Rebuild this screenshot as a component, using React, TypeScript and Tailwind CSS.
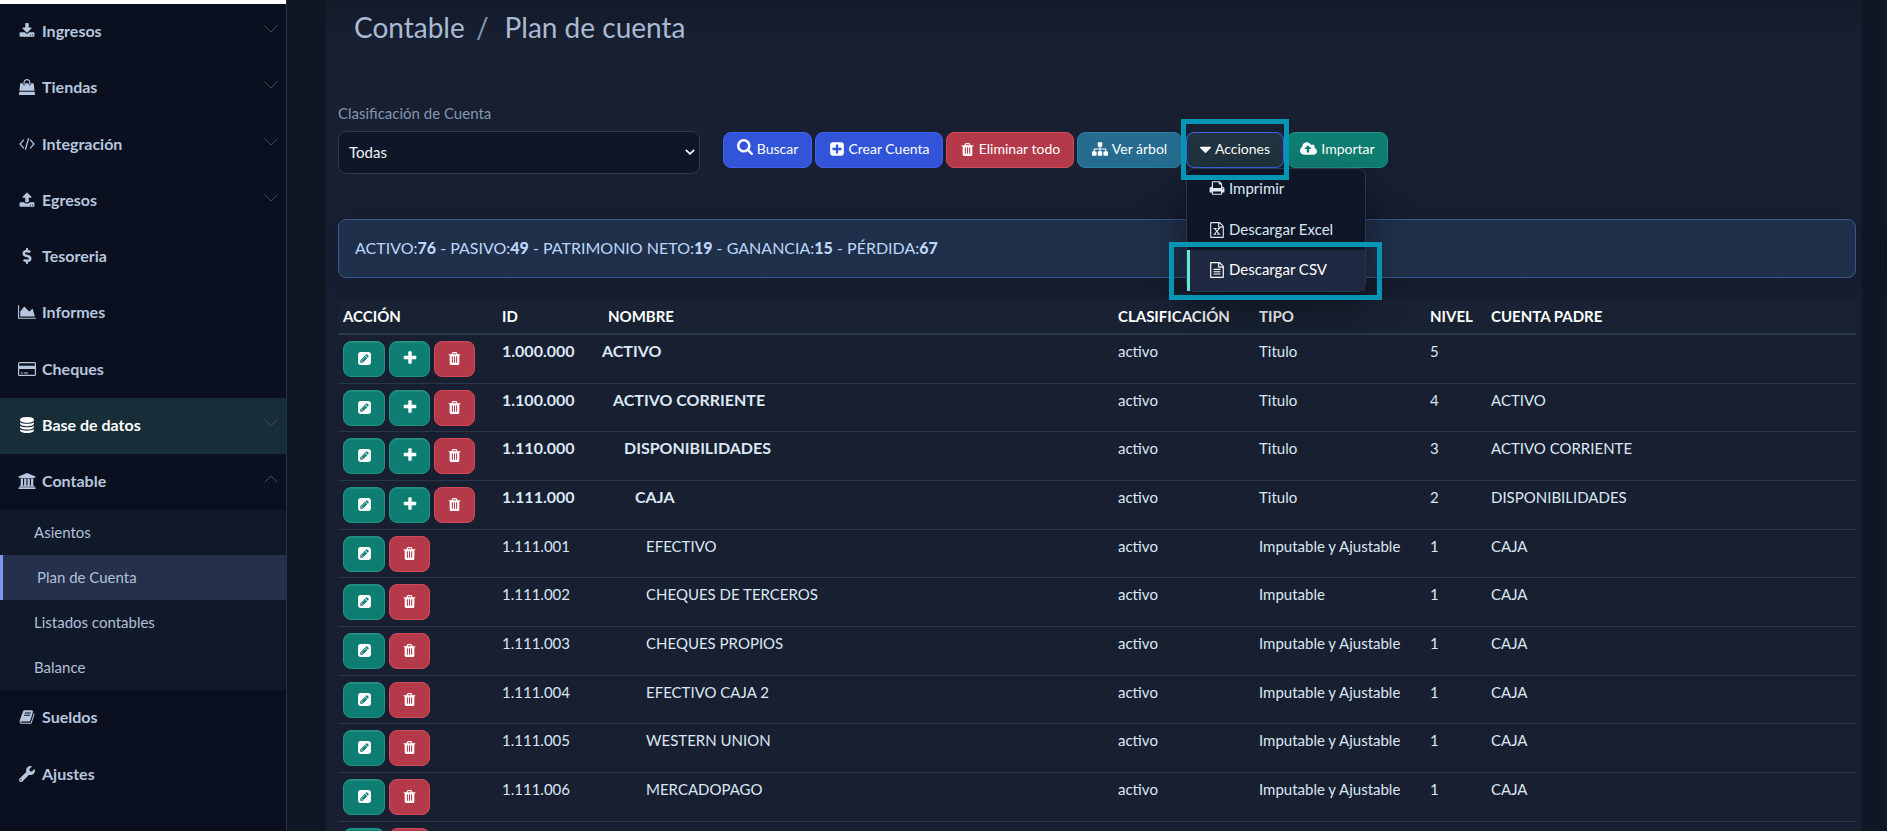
import * as React from "react";
import { FaDollarSign, FaWrench } from "react-icons/fa";

type IconProps = { className?: string };

const makeIcon = (d: string, viewBox = "0 0 1792 1792") => {
  return ({ className }: IconProps) => (
    <svg viewBox={viewBox} fill="currentColor" aria-hidden="true" className={className}>
      <path d={d} />
    </svg>
  );
};

const Download = makeIcon(
  "M1344 1344q0-26-19-45t-45-19-45 19-19 45 19 45 45 19 45-19 19-45zm256 0q0-26-19-45t-45-19-45 19-19 45 19 45 45 19 45-19 19-45zm128-224v320q0 40-28 68t-68 28h-1472q-40 0-68-28t-28-68v-320q0-40 28-68t68-28h465l135 136q58 56 136 56t136-56l136-136h464q40 0 68 28t28 68zm-325-569q17 41-14 70l-448 448q-18 19-45 19t-45-19l-448-448q-31-29-14-70 17-39 59-39h256v-448q0-26 19-45t45-19h256q26 0 45 19t19 45v448h256q42 0 59 39z"
);
const Upload = makeIcon(
  "M1344 1472q0-26-19-45t-45-19-45 19-19 45 19 45 45 19 45-19 19-45zm256 0q0-26-19-45t-45-19-45 19-19 45 19 45 45 19 45-19 19-45zm128-224v320q0 40-28 68t-68 28h-1472q-40 0-68-28t-28-68v-320q0-40 28-68t68-28h427q21 56 70.5 92t110.5 36h256q61 0 110.5-36t70.5-92h427q40 0 68 28t28 68zm-325-648q-17 40-59 40h-256v448q0 26-19 45t-45 19h-256q-26 0-45-19t-19-45v-448h-256q-42 0-59-40-17-39 14-69l448-448q18-19 45-19t45 19l448 448q31 30 14 69z"
);
const AreaChart = makeIcon(
  "M2048 1536v128h-2048v-1536h128v1408h1920zm-384-1024l256 896h-1664v-576l448-576 576 576z",
  "0 0 2048 1792"
);
const Database = makeIcon(
  "M896 768q237 0 443-43t325-127v170q0 69-103 128t-280 93.5-385 34.5-385-34.5-280-93.5-103-128v-170q119 84 325 127t443 43zm0 768q237 0 443-43t325-127v170q0 69-103 128t-280 93.5-385 34.5-385-34.5-280-93.5-103-128v-170q119 84 325 127t443 43zm0-384q237 0 443-43t325-127v170q0 69-103 128t-280 93.5-385 34.5-385-34.5-280-93.5-103-128v-170q119 84 325 127t443 43zm0-1152q208 0 385 34.5t280 93.5 103 128v128q0 69-103 128t-280 93.5-385 34.5-385-34.5-280-93.5-103-128v-128q0-69 103-128t280-93.5 385-34.5z"
);
const Bank = makeIcon(
  "M832 0l960 384v128h-128q0 26-20.5 45t-48.5 19h-1526q-28 0-48.5-19t-20.5-45h-128v-128zm-704 640h256v768h128v-768h256v768h128v-768h256v768h128v-768h256v768h59q28 0 48.5 19t20.5 45v64h-1664v-64q0-26 20.5-45t48.5-19h59v-768zm1595 960q28 0 48.5 19t20.5 45v128h-1920v-128q0-26 20.5-45t48.5-19h1782z",
  "-128 0 1920 1792"
);
const Book = makeIcon(
  "M1703 478q40 57 18 129l-275 906q-19 64-76.5 107.5t-122.5 43.5h-923q-77 0-148.5-53.5t-99.5-131.5q-24-67-2-127 0-4 3-27t4-37q1-8-3-21.5t-3-19.5q2-11 8-21t16.5-23.5 16.5-23.5q23-38 45-91.5t30-91.5q3-10 .5-30t-.5-28q3-11 17-28t17-23q21-36 42-92t25-90q1-9-2.5-32t.5-28q4-13 22-30.5t22-22.5q19-26 42.5-84.5t27.5-96.5q1-8-3-25.5t-2-26.5q2-8 9-18t18-23 17-21q8-12 16.5-30.5t15-35 16-36 19.5-32 26.5-23.5 36-11.5 47.5 5.5l-1 3q38-9 51-9h761q74 0 114 56t18 130l-274 906q-36 119-71.5 153.5t-128.5 34.5h-869q-27 0-38 15-11 16-1 43 24 70 144 70h923q29 0 56-15.5t35-41.5l300-987q7-22 5-57 38 15 59 43zm-1064 2q-4 13 2 22.5t20 9.5h608q13 0 25.5-9.5t16.5-22.5l21-64q4-13-2-22.5t-20-9.5h-608q-13 0-25.5 9.5t-16.5 22.5zm-83 256q-4 13 2 22.5t20 9.5h608q13 0 25.5-9.5t16.5-22.5l21-64q4-13-2-22.5t-20-9.5h-608q-13 0-25.5 9.5t-16.5 22.5z"
);
const Bag = makeIcon(
  "M1758 1436l34 260q3 39-23 68-26 28-65 28h-1616q-39 0-65-28-26-29-23-68l34-260h1724zm-96-890l82 762h-1696l82-762q4-34 30-57t60-23h224v128q0 53 37.500 90.500t90.500 37.500 90.500-37.500 37.500-90.500v-128h384v128q0 53 37.500 90.500t90.500 37.500 90.500-37.500 37.500-90.500v-128h212q34 0 60 23t30 57zm-382-162v212q0 26-19 45t-45 19-45-19-19-45v-212q0-106-75-181t-181-75-181 75-75 181v212q0 26-19 45t-45 19-45-19-19-45v-212q0-159 112.500-271.500t271.500-112.500 271.500 112.500 112.500 271.500z",
  "0 0 1800 1792"
);
const Search = makeIcon(
  "M1216 832q0-185-131.5-316.5t-316.5-131.5-316.5 131.5-131.5 316.5 131.5 316.5 316.5 131.5 316.5-131.5 131.5-316.5zm512 832q0 52-38 90t-90 38q-54 0-90-38l-343-342q-179 124-399 124-143 0-273.5-55.5t-225-150-150-225-55.5-273.5 55.5-273.5 150-225 225-150 273.5-55.5 273.5 55.5 225 150 150 225 55.5 273.5q0 220-124 399l343 343q37 37 37 90z",
  "64 128 1664 1664"
);
const Plus = makeIcon(
  "M1600 736v192q0 40-28 68t-68 28h-416v416q0 40-28 68t-68 28h-192q-40 0-68-28t-28-68v-416h-416q-40 0-68-28t-28-68v-192q0-40 28-68t68-28h416v-416q0-40 28-68t68-28h192q40 0 68 28t28 68v416h416q40 0 68 28t28 68z"
);
const PlusSquare = makeIcon(
  "M1408 960v-128q0-26-19-45t-45-19h-320v-320q0-26-19-45t-45-19h-128q-26 0-45 19t-19 45v320h-320q-26 0-45 19t-19 45v128q0 26 19 45t45 19h320v320q0 26 19 45t45 19h128q26 0 45-19t19-45v-320h320q26 0 45-19t19-45zm256-544v960q0 119-84.5 203.5t-203.5 84.5h-960q-119 0-203.5-84.5t-84.5-203.5v-960q0-119 84.5-203.5t203.5-84.5h960q119 0 203.5 84.5t84.5 203.5z"
);
const PencilSquare = makeIcon(
  "M404 1108l152 152-52 52h-56v-96h-96v-56zm414-390q14 13-3 30l-291 291q-17 17-30 3-14-13 3-30l291-291q17-17 30-3zm-274 690l544-544-288-288-544 544v288h288zm608-608l92-92q28-28 28-68t-28-68l-152-152q-28-28-68-28t-68 28l-92 92zm384-384v960q0 119-84.5 203.5t-203.5 84.5h-960q-119 0-203.5-84.5t-84.5-203.5v-960q0-119 84.5-203.5t203.5-84.5h960q119 0 203.5 84.5t84.5 203.5z",
  "-128 0 1792 1792"
);
const Trash = makeIcon(
  "M704 1376v-704q0-14-9-23t-23-9h-64q-14 0-23 9t-9 23v704q0 14 9 23t23 9h64q14 0 23-9t9-23zm256 0v-704q0-14-9-23t-23-9h-64q-14 0-23 9t-9 23v704q0 14 9 23t23 9h64q14 0 23-9t9-23zm256 0v-704q0-14-9-23t-23-9h-64q-14 0-23 9t-9 23v704q0 14 9 23t23 9h64q14 0 23-9t9-23zm-544-992h448l-48-117q-7-9-17-11h-317q-10 2-17 11zm928 32v64q0 14-9 23t-23 9h-96v948q0 83-47 143.5t-113 60.5h-832q-66 0-113-58.5t-47-141.5v-952h-96q-14 0-23-9t-9-23v-64q0-14 9-23t23-9h309l70-167q15-37 54-63t79-26h320q40 0 79 26t54 63l70 167h309q14 0 23 9t9 23z"
);
const Sitemap = makeIcon(
  "M1792 1248v320q0 40-28 68t-68 28h-320q-40 0-68-28t-28-68v-320q0-40 28-68t68-28h96v-192h-512v192h96q40 0 68 28t28 68v320q0 40-28 68t-68 28h-320q-40 0-68-28t-28-68v-320q0-40 28-68t68-28h96v-192h-512v192h96q40 0 68 28t28 68v320q0 40-28 68t-68 28h-320q-40 0-68-28t-28-68v-320q0-40 28-68t68-28h96v-192q0-52 38-90t90-38h512v-192h-96q-40 0-68-28t-28-68v-320q0-40 28-68t68-28h320q40 0 68 28t28 68v320q0 40-28 68t-68 28h-96v192h512q52 0 90 38t38 90v192h96q40 0 68 28t28 68z"
);
const CaretDown = makeIcon(
  "M1408 704q0 26-19 45l-448 448q-19 19-45 19t-45-19l-448-448q-19-19-19-45t19-45 45-19h896q26 0 45 19t19 45z",
  "384 384 1024 1024"
);
const CloudUpload = makeIcon(
  "M1152 864q0-14-9-23l-352-352q-9-9-23-9t-23 9l-351 351q-10 12-10 24 0 14 9 23t23 9h224v352q0 13 9.5 22.5t22.5 9.5h192q13 0 22.5-9.5t9.5-22.5v-352h224q13 0 22.5-9.5t9.5-22.5zm640 288q0 159-112.5 271.5t-271.5 112.5h-1088q-185 0-316.5-131.5t-131.5-316.5q0-130 70-240t188-165q-2-30-2-43 0-212 150-362t362-150q156 0 285.5 87t188.5 231q71-62 166-62 106 0 181 75t75 181q0 76-41 138 130 31 213.5 135.5t83.5 238.5z",
  "-128 0 1920 1792"
);
const Print = makeIcon(
  "M448 1536h896v-256h-896v256zm0-640h896v-384h-160q-40 0-68-28t-28-68v-160h-640v640zm1152 64q0-26-19-45t-45-19-45 19-19 45 19 45 45 19 45-19 19-45zm128 0v416q0 13-9.5 22.5t-22.5 9.5h-224v160q0 40-28 68t-68 28h-960q-40 0-68-28t-28-68v-160h-224q-13 0-22.5-9.5t-9.5-22.5v-416q0-79 56.5-135.5t135.5-56.5h64v-544q0-40 28-68t68-28h672q40 0 88 20t76 48l152 152q28 28 48 76t20 88v256h64q79 0 135.5 56.5t56.5 135.5z"
);

const Code = ({ className }: IconProps) => (
  <svg viewBox="0 0 18 18" fill="none" stroke="currentColor" strokeWidth="1.4" aria-hidden="true" className={className}>
    <path d="M5.500 4L1.200 9l4.300 5M12.500 4l4.300 5-4.300 5M10.800 2.500L7.200 15.500" />
  </svg>
);

const Card = ({ className }: IconProps) => (
  <svg viewBox="0 0 18 16" fill="currentColor" aria-hidden="true" className={className}>
    <path
      fillRule="evenodd"
      d="M1.500 1h15A1.500 1.500 0 0 1 18 2.500v11a1.500 1.500 0 0 1-1.500 1.500h-15A1.500 1.500 0 0 1 0 13.500v-11A1.500 1.500 0 0 1 1.500 1zM1.200 2.200v2.600h15.600V2.200zM1.200 8v5.800h15.600V8z"
    />
    <path d="M3 11.500h2v1H3zM6 11.500h4v1H6z" />
  </svg>
);

const fileOutline =
  "M1596 380q28 28 48 76t20 88v1152q0 40-28 68t-68 28h-1344q-40 0-68-28t-28-68v-1600q0-40 28-68t68-28h896q40 0 88 20t76 48zm-444-244v376h376q-10-29-22-41l-313-313q-12-12-41-22zm384 1528v-1024h-416q-40 0-68-28t-28-68v-416h-768v1536h1280z";

const FileText = makeIcon(
  fileOutline + "M512 768h768v128h-768zM512 1024h768v128h-768zM512 1280h768v128h-768z"
);
const FileExcel = makeIcon(
  fileOutline +
    "M500 1420v-110h85l215-268-205-262h-85v-110h330v110h-75l130 168 125-168h-75v-110h310v110h-85l-205 262 215 268h85v110h-330v-110h75l-140-178-140 178h75v110z"
);

const Chevron = ({ open }: { open?: boolean }) => (
  <svg
    viewBox="0 0 14 8"
    fill="none"
    stroke="currentColor"
    aria-hidden="true"
    className={open ? "h-2 w-3.5 rotate-180" : "h-2 w-3.5"}
  >
    <path d="M0.500 0.500L7 7L13.500 0.500" />
  </svg>
);

type MenuItem = {
  label: string;
  icon: React.ComponentType<IconProps>;
  chevron?: boolean;
  open?: boolean;
  active?: boolean;
  children?: { label: string; active?: boolean }[];
};

const menu: MenuItem[][] = [
  [
    { label: "Ingresos", icon: Download, chevron: true },
    { label: "Tiendas", icon: Bag, chevron: true },
  ],
  [
    { label: "Integración", icon: Code, chevron: true },
    { label: "Egresos", icon: Upload, chevron: true },
    { label: "Tesoreria", icon: FaDollarSign },
    { label: "Informes", icon: AreaChart },
  ],
  [
    { label: "Cheques", icon: Card },
    { label: "Base de datos", icon: Database, chevron: true, active: true },
    {
      label: "Contable",
      icon: Bank,
      chevron: true,
      open: true,
      children: [
        { label: "Asientos" },
        { label: "Plan de Cuenta", active: true },
        { label: "Listados contables" },
        { label: "Balance" },
      ],
    },
    { label: "Sueldos", icon: Book },
  ],
  [{ label: "Ajustes", icon: FaWrench }],
];

const Sidebar = () => {
  return (
    <aside className="w-[287px] shrink-0 border-r border-[#263347] bg-[#0a101f]">
      <div className="h-1 bg-white" />
      <nav className="flex flex-col gap-px">
        {menu.map((group) => (
          <ul key={group[0].label}>
            {group.map((item) => (
              <li key={item.label}>
                <a
                  href="#"
                  className={
                    item.active
                      ? "flex h-14 items-center bg-[#172e38] pr-2 pb-0.5 pl-[18px] text-base font-bold text-white"
                      : "flex h-14 items-center pr-2 pb-0.5 pl-[18px] text-base font-bold text-[#b6c6de]"
                  }
                >
                  <span className="flex w-6 shrink-0">
                    <item.icon className="h-4 w-[18px]" />
                  </span>
                  <span className="grow">{item.label}</span>
                  {item.chevron && (
                    <span className="mb-1 text-[#454a52]">
                      <Chevron open={item.open} />
                    </span>
                  )}
                </a>
                {item.children && (
                  <ul className="bg-[#10192a]">
                    {item.children.map((child) => (
                      <li key={child.label}>
                        <a
                          href="#"
                          className={
                            child.active
                              ? "flex h-[45px] items-center border-l-3 border-[#8094f8] bg-[#25304d] pl-[34px] text-[15px] text-[#b0c0d6]"
                              : "flex h-[45px] items-center pl-[34px] text-[15px] text-[#b0c0d6]"
                          }
                        >
                          {child.label}
                        </a>
                      </li>
                    ))}
                  </ul>
                )}
              </li>
            ))}
          </ul>
        ))}
      </nav>
    </aside>
  );
};

const buttonBase =
  "flex h-9 items-center justify-center gap-1 rounded-lg border pb-0.5 text-sm text-white";

const ActionsMenu = () => {
  return (
    <div className="relative ml-px">
      <button
        type="button"
        aria-expanded="true"
        className={`${buttonBase} w-[98px] border-[#4361ee] bg-[#20343f]`}
      >
        <CaretDown className="h-[11px] w-[11px]" />
        Acciones
      </button>
      <div className="absolute -inset-x-[5px] -top-[13px] z-20 h-[61px] border-5 border-[#0494b4]" />
      <ul className="absolute top-9 left-0 z-10 w-[180px] rounded-lg border border-[#2a364a] bg-[#0e1627] text-[15px] text-[#dbe6f3] shadow-[0_16px_40px_rgba(0,0,0,0.45)]">
        <li>
          <a href="#" className="flex h-10 items-center gap-1 pb-0.5 pl-[22px]">
            <Print className="h-4 w-4" />
            Imprimir
          </a>
        </li>
        <li>
          <a href="#" className="flex h-[41px] items-center gap-1 pl-[22px]">
            <FileExcel className="h-4 w-4" />
            Descargar Excel
          </a>
        </li>
        <li className="relative">
          <a href="#" className="flex h-[41px] items-center gap-1 border-l-3 border-[#5eead4] bg-[#1f2a42] pb-0.5 pl-[19px] text-white">
            <FileText className="h-4 w-4" />
            Descargar CSV
          </a>
          <div className="absolute -top-2 -right-[17px] -bottom-[9px] -left-[18px] border-5 border-[#0494b4]" />
        </li>
      </ul>
    </div>
  );
};

const Toolbar = () => {
  return (
    <form className="flex">
      <div className="w-[362px]">
        <label htmlFor="clasificacion" className="mb-1.5 block text-[15px] leading-[23px] text-[#8496af]">
          Clasificación de Cuenta
        </label>
        <div className="relative">
          <select
            id="clasificacion"
            className="h-[43px] w-full appearance-none rounded-lg border border-[#2d3b4f] bg-[#0e1627] px-2.5 text-[15px] text-[#eef3fa]"
          >
            <option>Todas</option>
          </select>
          <svg
            viewBox="0 0 10 6"
            fill="none"
            stroke="#ffffff"
            strokeWidth="1.600"
            aria-hidden="true"
            className="pointer-events-none absolute top-[18px] right-[5px] h-1.5 w-2.5"
          >
            <path d="M0.800 0.800L5 4.800L9.200 0.800" />
          </svg>
        </div>
      </div>
      <div className="mt-[30px] ml-[23px] flex items-start gap-[3px]">
        <button type="button" className={`${buttonBase} w-[89px] border-[#4361ee] bg-[#3154d8]`}>
          <Search className="mb-1 h-4 w-4" />
          Buscar
        </button>
        <button type="button" className={`${buttonBase} w-32 border-[#4361ee] bg-[#3154d8]`}>
          <PlusSquare className="h-4 w-4" />
          Crear Cuenta
        </button>
        <button type="button" className={`${buttonBase} w-32 border-[#d14b5b] bg-[#b53a49]`}>
          <Trash className="h-[15px] w-[15px]" />
          Eliminar todo
        </button>
        <button type="button" className={`${buttonBase} w-[105px] border-[#2c80a6] bg-[#256c90]`}>
          <Sitemap className="h-4 w-4" />
          Ver árbol
        </button>
        <ActionsMenu />
        <button type="button" className={`${buttonBase} w-[101px] border-[#1f9483] bg-[#0f7e72]`}>
          <CloudUpload className="h-4 w-[17px]" />
          Importar
        </button>
      </div>
    </form>
  );
};

const totals = [
  ["ACTIVO", "76"],
  ["PASIVO", "49"],
  ["PATRIMONIO NETO", "19"],
  ["GANANCIA", "15"],
  ["PÉRDIDA", "67"],
];

const Totals = () => {
  return (
    <div className="mt-[45px] flex h-[59px] items-center rounded-lg border border-[#365a8f] bg-[#20304a] px-4 pb-0.5 text-base text-[#bcd6fb] shadow-[0_10px_30px_rgba(20,16,30,0.25)]">
      <p>
        {totals.map(([name, count], i) => (
          <React.Fragment key={name}>
            {i > 0 && " - "}
            {name}:<b className="font-black">{count}</b>
          </React.Fragment>
        ))}
      </p>
    </div>
  );
};

type Account = {
  id: string;
  name: string;
  type: string;
  level: number;
  parent: string;
};

const accounts: Account[] = [
  { id: "1.000.000", name: "ACTIVO", type: "Titulo", level: 5, parent: "" },
  { id: "1.100.000", name: "ACTIVO CORRIENTE", type: "Titulo", level: 4, parent: "ACTIVO" },
  { id: "1.110.000", name: "DISPONIBILIDADES", type: "Titulo", level: 3, parent: "ACTIVO CORRIENTE" },
  { id: "1.111.000", name: "CAJA", type: "Titulo", level: 2, parent: "DISPONIBILIDADES" },
  { id: "1.111.001", name: "EFECTIVO", type: "Imputable y Ajustable", level: 1, parent: "CAJA" },
  { id: "1.111.002", name: "CHEQUES DE TERCEROS", type: "Imputable", level: 1, parent: "CAJA" },
  { id: "1.111.003", name: "CHEQUES PROPIOS", type: "Imputable y Ajustable", level: 1, parent: "CAJA" },
  { id: "1.111.004", name: "EFECTIVO CAJA 2", type: "Imputable y Ajustable", level: 1, parent: "CAJA" },
  { id: "1.111.005", name: "WESTERN UNION", type: "Imputable y Ajustable", level: 1, parent: "CAJA" },
  { id: "1.111.006", name: "MERCADOPAGO", type: "Imputable y Ajustable", level: 1, parent: "CAJA" },
];

// indentation of the account name by level
const indent: Record<number, string> = {
  5: "pl-[5px]",
  4: "pl-4",
  3: "pl-[27px]",
  2: "pl-[38px]",
  1: "pl-[49px]",
};

const rowButton = "flex h-9 items-center justify-center rounded-lg border pb-0.5 text-white";
const greenButton = `${rowButton} border-[#1f9483] bg-[#0f7e72] shadow-[inset_0_1px_0_rgba(255,255,255,0.1)]`;

const RowActions = ({ canAdd }: { canAdd?: boolean }) => {
  return (
    <td className="border-b border-[#2a374b] px-[5px] pt-1.5 align-top">
      <div className="flex gap-1">
        <button type="button" aria-label="Editar" className={`${greenButton} w-[42px]`}>
          <PencilSquare className="h-[15px] w-[15px]" />
        </button>
        {canAdd && (
          <button type="button" aria-label="Agregar" className={`${greenButton} w-[41px]`}>
            <Plus className="h-4 w-4" />
          </button>
        )}
        <button
          type="button"
          aria-label="Eliminar"
          className={`${rowButton} w-[41px] border-[#d14b5b] bg-[#b53a49]`}
        >
          <Trash className="h-[15px] w-[15px]" />
        </button>
      </div>
    </td>
  );
};

const AccountRow = ({ account }: { account: Account }) => {
  const isTitle = account.type === "Titulo";
  const cell = "border-b border-[#2a374b] px-[5px] pt-1.5 align-top leading-5";

  return (
    <tr className="h-[49px] nth-[3n+2]:h-12">
      <RowActions canAdd={isTitle} />
      <td className={isTitle ? `${cell} text-base/5 font-bold` : cell}>{account.id}</td>
      <td className="border-b border-[#2a374b] pt-1.5 align-top leading-5">
        <div className={isTitle ? `${indent[account.level]} text-base/5 font-bold` : indent[account.level]}>
          {account.name}
        </div>
      </td>
      <td className={cell}>activo</td>
      <td className={cell}>{account.type}</td>
      <td className={cell}>{account.level}</td>
      <td className={cell}>{account.parent}</td>
    </tr>
  );
};

const AccountsTable = () => {
  const head = "border-b-2 border-[#2a374f] px-[5px] pt-0.5 text-left";

  return (
    <table className="mt-5 w-full table-fixed border-separate border-spacing-0 text-[15px] text-[#dbe7f3]">
      <thead className="bg-[#182233] text-white">
        <tr className="h-[37px]">
          <th className={`${head} w-[159px]`}>ACCIÓN</th>
          <th className={`${head} w-[100px]`}>ID</th>
          <th className="border-b-2 border-[#2a374f] pt-0.5 pl-[11px] text-left">NOMBRE</th>
          <th className={`${head} w-[141px]`}>CLASIFICACIÓN</th>
          <th className={`${head} w-[171px]`}>TIPO</th>
          <th className={`${head} w-[61px]`}>NIVEL</th>
          <th className={`${head} w-[370px]`}>CUENTA PADRE</th>
        </tr>
      </thead>
      <tbody>
        {accounts.map((account) => (
          <AccountRow key={account.id} account={account} />
        ))}
        <tr>
          <RowActions />
          <td colSpan={6} />
        </tr>
      </tbody>
    </table>
  );
};

export default function App() {
  return (
    <div className="flex h-screen overflow-hidden bg-[#0f1624] font-['Lato',sans-serif]">
      <Sidebar />
      <main className="min-w-0 grow pr-[25px] pl-[39px]">
        <div className="min-h-screen bg-linear-to-b from-[#131a29] to-[#171f31] to-[40px] pr-1.5 pl-3">
          <h1 className="h-[102px] pt-1.5 pl-4 text-[28px] leading-[42px] text-[#a9bad3]">
            Contable <span className="ml-1 text-[#8798b0]">/</span>
            <span className="ml-4">Plan de cuenta</span>
          </h1>
          <Toolbar />
          <Totals />
          <AccountsTable />
        </div>
      </main>
    </div>
  );
}
